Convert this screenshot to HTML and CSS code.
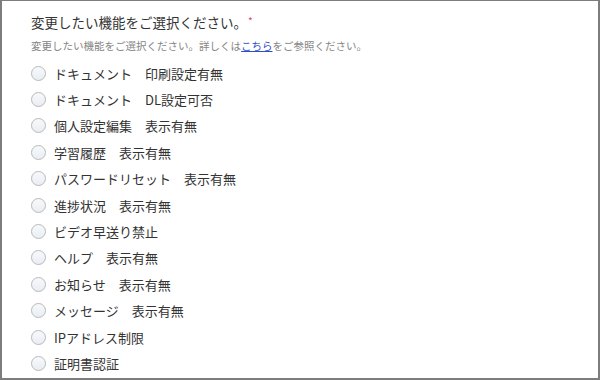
FILE: index.html
```html
<!DOCTYPE html>
<html lang="ja">
<head>
    <meta charset="UTF-8">
    <meta name="viewport" content="width=device-width, initial-scale=1.0">
    <title>機能選択</title>
    <link rel="stylesheet" href="styles.css">
</head>
<body>
    <div class="form-frame">
        <div class="question">
            <div class="question-title">変更したい機能をご選択ください。<span class="required">*</span></div>
            <div class="question-help">変更したい機能をご選択ください。詳しくは<a href="#">こちら</a>をご参照ください。</div>
            <div class="options">
                <label class="option"><span class="radio"></span>ドキュメント　印刷設定有無</label>
                <label class="option"><span class="radio"></span>ドキュメント　DL設定可否</label>
                <label class="option"><span class="radio"></span>個人設定編集　表示有無</label>
                <label class="option"><span class="radio"></span>学習履歴　表示有無</label>
                <label class="option"><span class="radio"></span>パスワードリセット　表示有無</label>
                <label class="option"><span class="radio"></span>進捗状況　表示有無</label>
                <label class="option"><span class="radio"></span>ビデオ早送り禁止</label>
                <label class="option"><span class="radio"></span>ヘルプ　表示有無</label>
                <label class="option"><span class="radio"></span>お知らせ　表示有無</label>
                <label class="option"><span class="radio"></span>メッセージ　表示有無</label>
                <label class="option"><span class="radio"></span>IPアドレス制限</label>
                <label class="option"><span class="radio"></span>証明書認証</label>
            </div>
        </div>
    </div>
</body>
</html>
```

FILE: styles.css
```css
* {
    margin: 0;
    padding: 0;
    box-sizing: border-box;
}

body {
    background: #fff;
    font-family: "Noto Sans CJK JP", "Noto Sans", sans-serif;
    color: #333;
    overflow: hidden;
}

.form-frame {
    width: 600px;
    height: 380px;
    border: 2px solid #7d7d7d;
    border-top-width: 1px;
    overflow: hidden;
}

.question {
    padding: 10px 0 0 29px;
}

.question-title {
    font-size: 13.5px;
    line-height: 20px;
    color: #333;
}

.required {
    color: #e2455f;
    font-size: 10px;
    margin-left: 1px;
    vertical-align: 3px;
}

.question-help {
    margin-top: 6px;
    font-size: 10.5px;
    line-height: 16px;
    color: #858585;
}

.question-help a {
    color: #2f4fc9;
    text-decoration: underline;
}

.options {
    margin-top: 6px;
    display: flex;
    flex-direction: column;
}

.option {
    height: 26.4px;
    display: flex;
    align-items: center;
    gap: 8px;
    font-size: 13px;
    color: #333;
}

.radio {
    width: 15px;
    height: 15px;
    border: 1px solid #b9b9b9;
    border-radius: 50%;
    background: linear-gradient(180deg, #f7f9fb, #e9eef4);
    flex-shrink: 0;
}
```
